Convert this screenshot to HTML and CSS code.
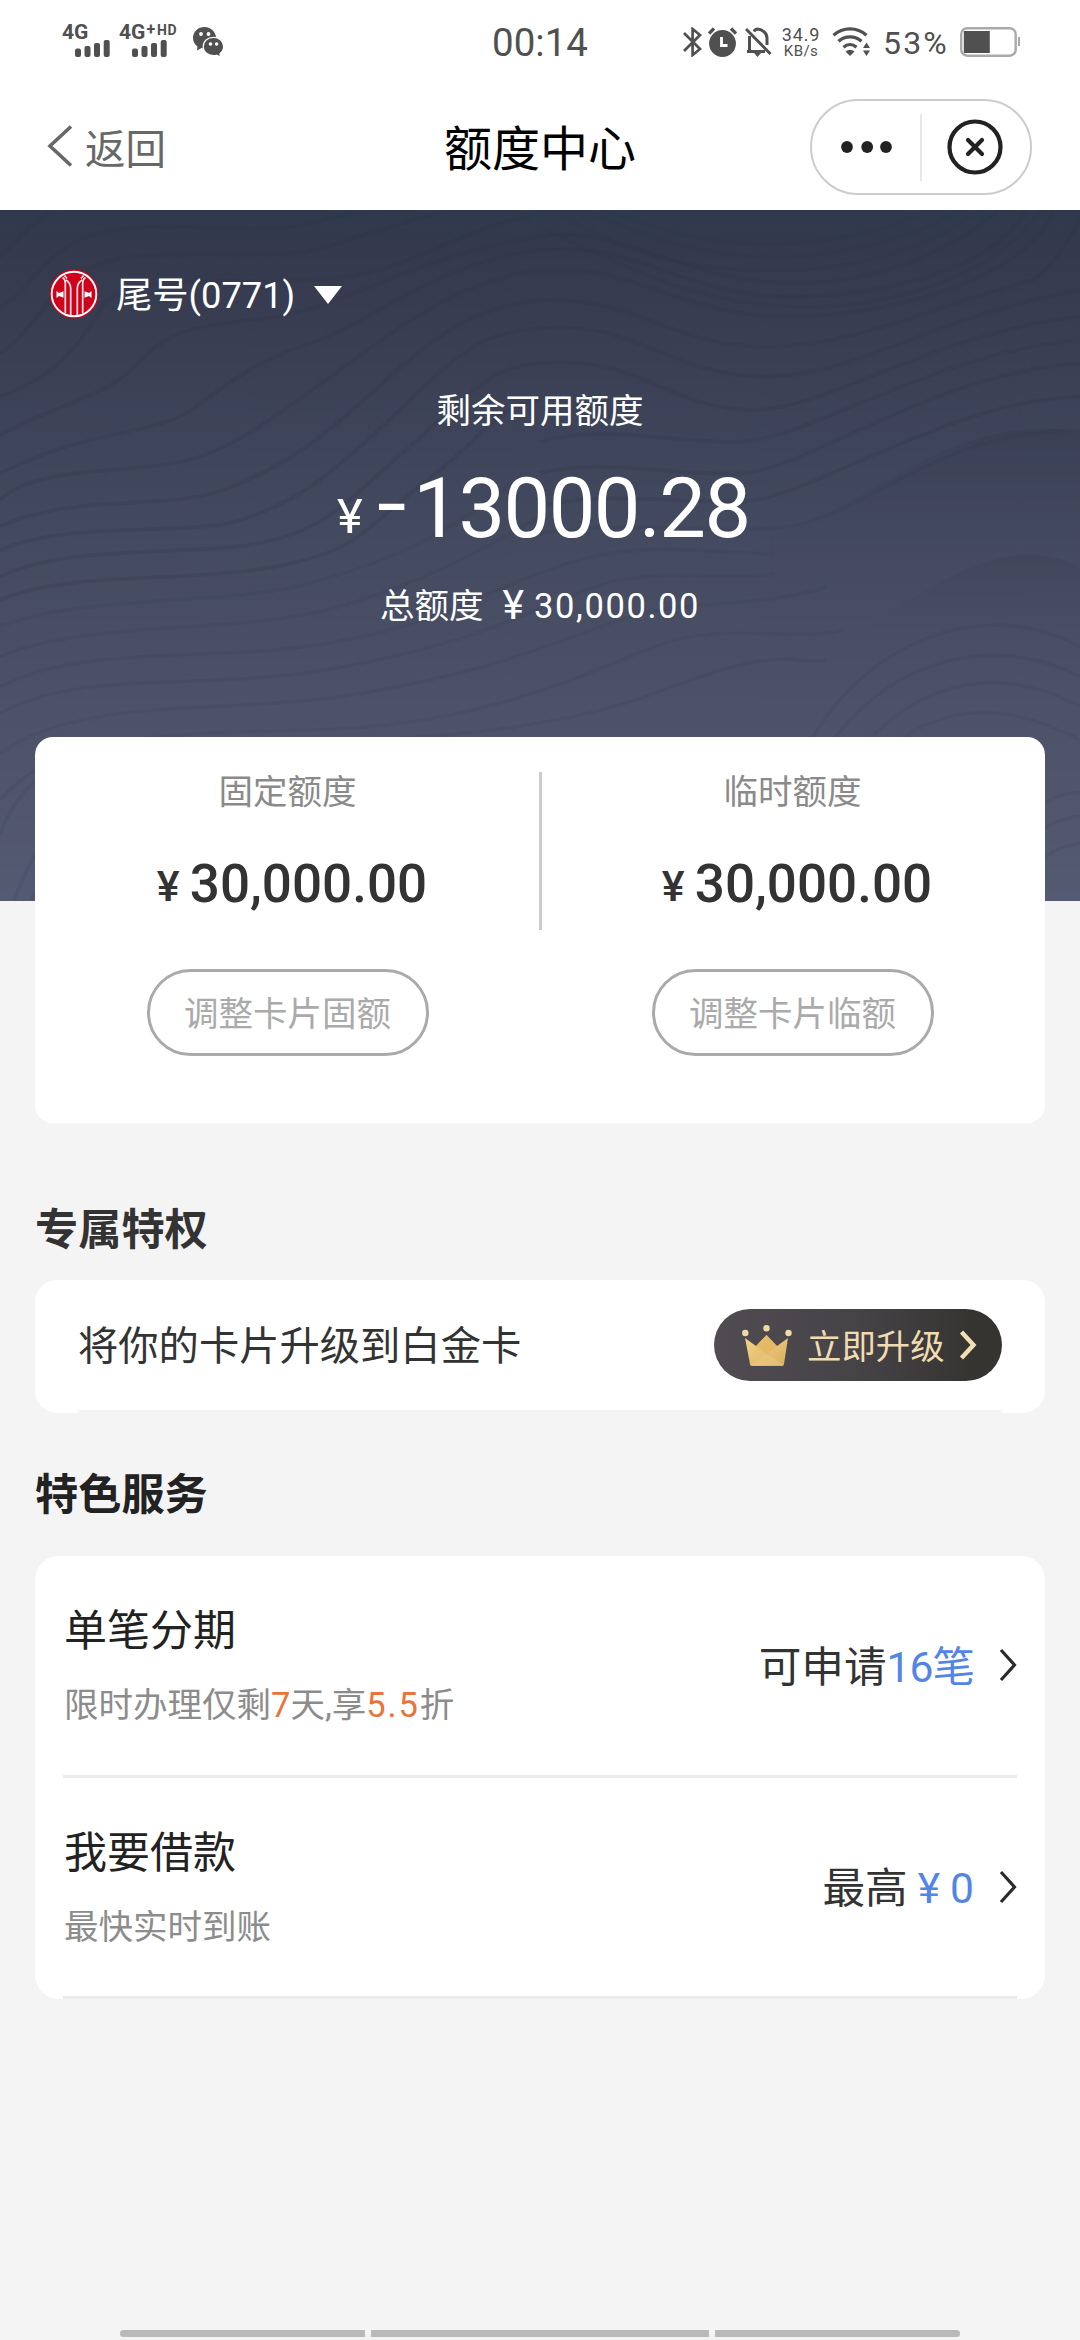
FILE: index.html
```html
<!DOCTYPE html>
<html lang="zh-CN">
<head>
<meta charset="utf-8">
<title>额度中心</title>
<link rel="stylesheet" href="styles.css">
</head>
<body>
<div class="page">
  <div class="status">
    <div class="status-left">
      <div class="sim">
        <span class="net">4G</span>
        <svg class="bars" width="35" height="17" viewBox="0 0 35 17"><g fill="#505050"><rect y="8.500" width="6" height="8.500" rx="2"/><rect x="9.500" y="6" width="6" height="11" rx="2"/><rect x="19" y="3" width="6" height="14" rx="2"/><rect x="28.700" width="6" height="17" rx="2"/></g></svg>
      </div>
      <div class="sim sim-two">
        <span class="net">4G<sup class="plus">+</sup><sup class="hd">HD</sup></span>
        <svg class="bars" width="35" height="17" viewBox="0 0 35 17"><g fill="#505050"><rect y="8.500" width="6" height="8.500" rx="2"/><rect x="9.500" y="6" width="6" height="11" rx="2"/><rect x="19" y="3" width="6" height="14" rx="2"/><rect x="28.700" width="6" height="17" rx="2"/></g></svg>
      </div>
      <svg class="wechat" width="31" height="30" viewBox="0 0 31 30">
        <path d="M11.500 0C5 0 0 4.800 0 11c0 3.600 1.700 6.500 4.400 8.500l-.4 4 4.500-2.500c1 .2 2 .4 3 .4C18 21.400 23 17 23 11S18 0 11.500 0Z" fill="#505050"/>
        <path d="M20.400 10.300c-5.800 0-10.200 4-10.200 9.200s4.400 9.200 10.200 9.200c1.100 0 2.200-.2 3.200-.5l3.800 1.800-.4-3.300c2.200-1.700 3.600-4.300 3.600-7.200 0-5.200-4.400-9.200-10.200-9.200Z" fill="#505050" stroke="#fff" stroke-width="1.200"/>
        <g fill="#fff"><circle cx="8" cy="7" r="1.900"/><circle cx="15.500" cy="7" r="1.900"/><circle cx="17.500" cy="17" r="1.800"/><circle cx="23.600" cy="17" r="1.800"/></g>
      </svg>
    </div>
    <div class="clock">00:14</div>
    <div class="status-right">
      <svg width="19" height="30" viewBox="0 0 19 30"><path d="M1 6 17 22 9.600 28V2L17 8 1 24" fill="none" stroke="#505050" stroke-width="2.700"/></svg>
      <svg class="alarm" width="29" height="30" viewBox="0 0 29 30"><circle cx="14.500" cy="16.500" r="13.400" fill="#505050"/><path d="M1 6.500 6 1.500M28 6.500 23 1.500" stroke="#505050" stroke-width="3.200"/><path d="M13.500 10v8.500h6" fill="none" stroke="#fff" stroke-width="2.800"/></svg>
      <svg class="bell" width="27" height="30" viewBox="0 0 27 30"><path d="M4.500 9v14M2 24.500h18M9 4.500c1-1.800 2-2.500 3.500-2.500 5 .5 9.500 4 9.500 9v7M1 2l24.500 25" fill="none" stroke="#505050" stroke-width="3"/><path d="M9 26h7l-3.500 4Z" fill="#505050"/></svg>
      <div class="speed"><span>34.9</span><small>KB/s</small></div>
      <svg class="wifi" width="39" height="30" viewBox="0 0 39 30"><g fill="none" stroke="#505050" stroke-width="3.300"><path d="M1.500 8.300C11-.2 25-.2 34.500 8.300"/><path d="M6.500 14.300c6.500-6 16.500-6 23 0"/><path d="M11.500 20.300c4-3.600 9-3.600 13 0"/></g><path d="M13.500 24.500q4.500-3.500 9 0L18 29Z" fill="#505050"/><path d="M31 21l3.500-5.500L38 21ZM31 23.500l3.500 5.500 3.500-5.500Z" fill="#505050"/></svg>
      <span class="pct">53%</span>
      <svg class="battery" width="60" height="30" viewBox="0 0 60 30"><rect x="1.200" y="1.200" width="54.500" height="27.500" rx="6" fill="#fff" stroke="#aaa" stroke-width="2.400"/><rect x="3.800" y="4" width="26" height="22" fill="#505050"/><path d="M59 10v9" stroke="#aaa" stroke-width="2"/></svg>
    </div>
  </div>

  <div class="nav">
    <div class="back">
      <svg width="26" height="42" viewBox="0 0 26 42"><path d="M24 1.500 3 21l21 19.500" fill="none" stroke="#686868" stroke-width="3.600"/></svg>
      <span>返回</span>
    </div>
    <div class="title">额度中心</div>
    <div class="capsule">
      <svg class="dots" width="52" height="14" viewBox="0 0 52 14"><g fill="#222"><circle cx="6" cy="7" r="5.900"/><circle cx="26.200" cy="7" r="5.900"/><circle cx="45" cy="7" r="5.900"/></g></svg>
      <i class="capsule-line"></i>
      <svg class="close" width="56" height="56" viewBox="0 0 56 56"><circle cx="28" cy="28" r="25.500" fill="none" stroke="#222" stroke-width="4.200"/><path d="m21 21 14 14M35 21 21 35" stroke="#222" stroke-width="4.200" stroke-linecap="round"/></svg>
    </div>
  </div>

  <div class="hero">
    <svg class="waves" width="1080" height="691" viewBox="0 0 1080 691">
      <defs>
        <linearGradient id="hill" x1="0" y1="0" x2="0" y2="1"><stop offset="0" stop-color="#363b50" stop-opacity=".5"/><stop offset=".7" stop-color="#464b61" stop-opacity="0"/></linearGradient>
        <linearGradient id="hillLow" x1="0" y1="0" x2="0" y2="1"><stop offset="0" stop-color="#3a3f54" stop-opacity=".38"/><stop offset=".7" stop-color="#464b61" stop-opacity="0"/></linearGradient>
      </defs>
      <path d="M770 325C860 300 920 232 1020 220Q1050 216 1080 222V470H770Z" fill="url(#hill)"/>
      <path d="M760 480C870 430 950 338 1040 345Q1065 348 1080 358V480Z" fill="url(#hillLow)"/>
      <g transform="translate(0 -10) scale(.3444 .3333)" fill="none" stroke="#2b3047" stroke-opacity=".2" stroke-width="11">
        <path d="M0 170C60 120 90 60 160 30"/>
        <path d="M0 320C100 270 130 120 330 90S760 110 900 70S1060 40 1120 30"/>
        <path d="M0 460C120 380 150 220 330 180S800 190 950 140S1200 60 1300 30"/>
        <path d="M0 590C160 530 230 440 290 330S600 250 900 240S1300 90 1540 50"/>
        <path d="M0 705C150 620 300 590 380 510S480 400 620 375S800 365 950 310S1300 150 1568 110C1800 70 2000 250 2300 250S2800 120 2900 30"/>
        <path d="M0 820C250 690 450 700 540 640S700 500 900 430S1250 190 1568 150C1850 120 1980 290 2290 290S2900 190 2980 30"/>
        <path d="M0 900C100 800 350 820 500 790C650 770 800 650 1000 500S1350 240 1568 210C1850 190 1980 350 2280 350S2980 240 3060 30"/>
        <path d="M0 980C200 880 500 930 650 870S900 750 1100 560S1400 320 1568 300C1850 290 1950 440 2220 440S2700 320 3000 240Q3090 170 3136 50"/>
        <path d="M0 1050C200 960 550 1010 700 960S950 840 1150 640S1400 400 1568 385C1850 360 1950 530 2220 530S2700 350 3136 270"/>
        <path d="M0 1130C200 1030 550 1070 750 1030S1000 910 1200 730S1430 500 1568 490C1850 460 1950 630 2180 630S2700 400 3136 350"/>
        <path d="M0 1200C200 1110 550 1150 800 1100S1050 990 1230 850S1430 620 1568 600"/>
        <path d="M1568 725C1750 670 1950 730 2150 725S2700 460 3136 420"/>
        <path d="M1568 820C1750 770 1950 830 2150 820S2700 520 3136 490"/>
        <path d="M1568 920C1750 870 1950 910 2150 905S2750 600 3136 590"/>
      </g>
      <g transform="translate(0 -10) scale(.3444 .3333)" fill="none" stroke="#2b3047" stroke-opacity=".1" stroke-width="10">
        <path d="M1568 1000C1800 960 2000 1000 2250 985S2700 690 3136 690"/>
        <path d="M1700 30C1900 130 2100 180 2300 170S2700 90 2780 30"/>
        <path d="M1760 30C1950 110 2100 140 2290 130S2600 80 2680 30"/>
        <path d="M1640 50C1850 180 2050 220 2300 210S2740 120 2840 30"/>
        <path d="M1568 80C1800 190 2000 310 2300 320S2900 220 3020 30"/>
        <path d="M0 1280C250 1180 650 1220 900 1150S1300 1000 1500 840"/>
        <path d="M0 1370C250 1260 700 1300 950 1230S1350 1080 1568 950"/>
        <path d="M0 1460C250 1330 600 1390 950 1330S1400 1170 1650 1090S2100 1070 2250 1060"/>
        <path d="M0 1540C250 1400 600 1480 1000 1400S1500 1250 1700 1170S2100 1150 2250 1120"/>
        <path d="M0 1660C250 1480 650 1550 1050 1480S1600 1330 1800 1260S2200 1230 2400 1160"/>
        <path d="M0 1800C150 1620 400 1600 900 1590S1700 1420 1900 1340S2300 1330 2450 1290"/>
        <path d="M0 1900C80 1700 200 1650 500 1640S1500 1640 1900 1480S2300 1400 2400 1380"/>
        <path d="M2340 1650C2500 1330 2850 1180 3136 1340"/>
        <path d="M2400 1650C2550 1410 2850 1280 3136 1430"/>
        <path d="M2460 1700C2600 1490 2850 1360 3136 1520"/>
        <path d="M2520 1700C2650 1560 2850 1460 3136 1620"/>
        <path d="M2980 1860Q3060 1770 3136 1780M2980 1930Q3060 1850 3136 1850M2980 2010Q3060 1940 3136 1930M40 2100Q120 1900 200 1830M90 2100Q150 2000 200 1940"/>
      </g>
    </svg>
    <div class="account">
      <svg width="50" height="50" viewBox="0 0 50 50">
        <circle cx="25" cy="25" r="24.500" fill="#d0021b"/>
        <circle cx="25" cy="25" r="22.300" fill="none" stroke="#fff" stroke-width="1.900"/>
        <g fill="none" stroke="#fbe3e3" stroke-width="1.700"><path d="M16.300 44.500V14Q16.300 10 13.500 8.500M33.700 44.500V14Q33.700 10 36.500 8.500M21.700 46.500V19Q21.500 14 17 11M28.300 46.500V19Q28.500 14 33 11M15.500 6.500 18 9.500M34.500 6.500 32 9.500"/></g>
        <path d="M7.500 22 10 24l4.500-1.800v6.600L10 27l-2.500 2ZM42.500 22 40 24l-4.500-1.800v6.600L40 27l2.500 2Z" fill="#fff"/>
      </svg>
      <span class="tail">尾号(0771)</span>
      <svg class="caret" width="28" height="18" viewBox="0 0 28 18"><path d="M0 0h28L14 18Z" fill="#fff"/></svg>
    </div>
    <div class="avail-label">剩余可用额度</div>
    <div class="avail"><span class="yen">¥</span><span class="minus">-</span><span>13000.28</span></div>
    <div class="total"><span>总额度</span><span class="total-yen">¥</span><span class="total-num">30,000.00</span></div>
  </div>

  <div class="limits">
    <div class="limit">
      <div class="limit-label">固定额度</div>
      <div class="limit-num"><span class="limit-yen">¥</span>30,000.00</div>
      <div class="limit-btn">调整卡片固额</div>
    </div>
    <i class="limit-line"></i>
    <div class="limit">
      <div class="limit-label">临时额度</div>
      <div class="limit-num"><span class="limit-yen">¥</span>30,000.00</div>
      <div class="limit-btn">调整卡片临额</div>
    </div>
  </div>

  <h2 class="heading heading-perk">专属特权</h2>
  <div class="card perk">
    <div class="perk-row">
      <span class="perk-text">将你的卡片升级到白金卡</span>
      <div class="upgrade">
        <svg width="50" height="41" viewBox="0 0 50 41"><defs><linearGradient id="gold" x1="0" y1="0" x2="1" y2="1"><stop offset="0" stop-color="#f5d488"/><stop offset="1" stop-color="#d9ae5f"/></linearGradient></defs><path d="M3 13 14 21 24.500 10 35 21 46 13 42 39Q42 41 40 41H10Q8 41 8 39Z" fill="url(#gold)"/><path d="M24.500 10 35 21 24.500 29 14 21Z" fill="#e0b25c" opacity=".6"/><path d="M8 40 24.500 29 42 40" fill="#ecc983" opacity=".5"/><g fill="#efd9a6"><circle cx="3.300" cy="8" r="3.200"/><circle cx="24.500" cy="3.300" r="3.200"/><circle cx="46.500" cy="8" r="3.200"/></g></svg>
        <span>立即升级</span>
        <svg class="go" width="18" height="30" viewBox="0 0 18 30"><path d="M2.500 2 14.500 15 2.500 28" fill="none" stroke="#f3dfb3" stroke-width="4.400"/></svg>
      </div>
    </div>
  </div>

  <h2 class="heading heading-service">特色服务</h2>
  <div class="card services">
    <div class="service">
      <div>
        <div class="service-name">单笔分期</div>
        <div class="service-note">限时办理仅剩<b>7</b>天,享<b class="wide">5.5</b>折</div>
      </div>
      <div class="service-right"><span>可申请<em class="count">16笔</em></span><svg width="18" height="34" viewBox="0 0 18 34"><path d="M2 2 15.500 17 2 32" fill="none" stroke="#2b2b2b" stroke-width="3.200"/></svg></div>
    </div>
    <div class="service">
      <div>
        <div class="service-name">我要借款</div>
        <div class="service-note">最快实时到账</div>
      </div>
      <div class="service-right"><span>最高<em class="money"><span>¥</span><span>0</span></em></span><svg width="18" height="34" viewBox="0 0 18 34"><path d="M2 2 15.500 17 2 32" fill="none" stroke="#2b2b2b" stroke-width="3.200"/></svg></div>
    </div>
  </div>

  <div class="gesture"><i></i><i></i><i></i></div>
</div>
</body>
</html>
```
FILE: styles.css
```css
* { box-sizing: border-box; }
body {
  margin: 0;
  background: #f4f4f4;
  font-family: Roboto, "Noto Sans CJK SC", sans-serif;
  color: #333;
}
svg { display: block; flex: none; }
.page {
  width: 1080px;
  height: 2340px;
  display: flex;
  flex-direction: column;
  overflow: hidden;
}

/* status bar */
.status {
  height: 84px;
  flex: none;
  background: #fff;
  display: grid;
  grid-template-columns: 430px 220px 430px;
  color: #505050;
}
.status-left { display: flex; padding: 25px 0 0 62px; }
.sim { width: 57px; height: 32px; }
.sim-two { width: 74px; }
.net {
  display: flex;
  height: 15px;
  font-size: 21px;
  line-height: 15px;
  font-weight: 700;
}
.plus, .hd { font-size: 16px; line-height: 10px; }
.plus { margin-left: 1px; }
.hd { font-size: 14px; margin-left: 2px; letter-spacing: .5px; }
.bars { margin-left: 13px; }
.wechat { margin-top: 2px; }
.clock {
  text-align: center;
  font-size: 38.500px;
  line-height: 85px;
}
.status-right { display: flex; padding: 27px 0 0 33px; }
.alarm { margin-left: 6px; }
.bell { margin-left: 8px; }
.speed {
  width: 42px;
  margin: -3px 0 0 8px;
  display: flex;
  flex-direction: column;
  align-items: center;
  font-size: 18px;
  line-height: 21px;
  letter-spacing: .8px;
}
.speed small { font-size: 15px; line-height: 13px; letter-spacing: .4px; }
.wifi { margin-left: 10px; }
.pct { width: 89px; padding-left: 12px; font-size: 32px; line-height: 33px; letter-spacing: 2.2px; }

/* title bar */
.nav {
  height: 126px;
  flex: none;
  background: #fff;
  display: grid;
  grid-template-columns: 1fr auto 1fr;
}
.back {
  display: flex;
  padding: 41px 0 0 47px;
  font-size: 40.500px;
  line-height: 50px;
  color: #686868;
}
.back span { margin-left: 12px; }
.title { font-size: 48px; line-height: 132px; color: #000; }
.capsule {
  justify-self: end;
  width: 222px;
  height: 96px;
  margin: 15px 48px 0 0;
  border: 2px solid #ccc;
  border-radius: 48px;
  display: flex;
  align-items: center;
}
.dots { margin-left: 29px; }
.capsule-line { width: 2px; height: 67px; margin-left: 27px; background: #e8e8e8; }
.close { margin-left: 25px; }

/* balance header */
.hero {
  position: relative;
  height: 691px;
  flex: none;
  padding-top: 59px;
  background: linear-gradient(#2f3a4d 0, #34394e 40px, #42485d 300px, #4d5268 500px, #545a71 100%);
  color: #fff;
}
.waves { position: absolute; inset: 0; }
.account, .avail-label, .avail, .total { position: relative; }
.account { display: flex; height: 50px; padding-left: 49px; }
.tail { margin-left: 17px; font-size: 36.300px; line-height: 53px; }
.caret { margin: 17px 0 0 19px; }
.avail-label {
  margin-top: 67px;
  text-align: center;
  font-size: 34.5px;
  line-height: 50px;
}
.avail {
  display: flex;
  height: 90px;
  margin-top: 25px;
  padding-left: 337px;
  font-size: 83px;
  line-height: 95px;
  letter-spacing: -1.5px;
}
.yen { font-size: 49px; line-height: 112px; }
.minus { width: 36px; margin-left: 16px; line-height: 85px; transform: scaleX(1.28); transform-origin: left; }
.total {
  display: flex;
  margin-top: 30px;
  padding-left: 380px;
  font-size: 34.5px;
  line-height: 50px;
}
.total-yen { margin-left: 19px; font-size: 41px; line-height: 48px; }
.total-num { margin-left: 10px; letter-spacing: 1.6px; }

/* fixed and temporary limits */
.limits {
  position: relative;
  width: 1010px;
  height: 386px;
  flex: none;
  margin: -164px auto 0;
  background: #fff;
  border-radius: 18px;
  display: flex;
}
.limit {
  flex: 1;
  display: flex;
  flex-direction: column;
  align-items: center;
}
.limit-label { margin-top: 30px; font-size: 34.5px; line-height: 50px; color: #8a8a8a; }
.limit-num {
  display: flex;
  height: 60px;
  margin-top: 36px;
  font-size: 53px;
  line-height: 62px;
  font-weight: 500;
  padding-left: 9px;
}
.limit-yen { width: 33px; font-size: 43px; line-height: 66px; }
.limit-btn {
  width: 282px;
  height: 87px;
  margin-top: 56px;
  border: 3px solid #aaa;
  border-radius: 44px;
  text-align: center;
  font-size: 34.5px;
  line-height: 84px;
  color: #aaa;
}
.limit-line { width: 3px; height: 158px; margin: 35px -1.5px 0; background: #ccc; }

/* sections */
.heading { margin: 0 0 0 35px; flex: none; font-size: 43.200px; line-height: 60px; font-weight: 700; }
.heading-perk { margin-top: 78px; }
.heading-service { margin-top: 53px; color: #222; }
.card { width: 1010px; flex: none; margin: 0 auto; background: #fff; }
.perk { height: 133px; margin-top: 19px; padding: 0 43px; border-radius: 22px; }
.perk-row {
  height: 133px;
  border-bottom: 3px solid #f3f3f3;
  display: flex;
  justify-content: space-between;
  align-items: center;
}
.perk-text { font-size: 40.3px; line-height: 60px; padding-top: 3px; }
.upgrade {
  width: 288px;
  height: 72px;
  padding-left: 28px;
  border-radius: 36px;
  background: linear-gradient(90deg, #504c52, #464347 50%, #353431 90%);
  display: flex;
  align-items: center;
  font-size: 34.4px;
  color: #f0dcb0;
}
.upgrade span { margin: 0 0 3px 15px; }
.go { margin-left: 14px; }
.services { height: 443px; margin-top: 30px; padding: 0 28px 0; border-radius: 24px; }
.service {
  height: 221.5px;
  border-bottom: 3px solid #ececec;
  display: flex;
  justify-content: space-between;
  padding-left: 1px;
}
.service-name { margin-top: 45px; font-size: 43px; line-height: 60px; color: #222; }
.service-note { margin-top: 19px; font-size: 34.5px; line-height: 50px; color: #8c8c8c; }
.service-note b { font-weight: 400; color: #e8743c; }
.service-note .wide { letter-spacing: 1.9px; }
.service-right { display: flex; align-items: center; font-size: 42.600px; }
.service-right > span { margin-bottom: 4px; }
.service-right svg { margin-left: 25px; }
.service-right em { font-style: normal; color: #5485e6; }
.service-right .count { letter-spacing: -1px; }
.service-right .money span { margin-left: 10px; }

.gesture {
  margin-top: auto;
  padding: 0 120px 3px;
  display: grid;
  grid-template-columns: 245px 1fr 245px;
  gap: 6px;
}
.gesture i { height: 7px; background: #b9b9b9; }
.gesture i:first-child { border-radius: 4px 0 0 4px; }
.gesture i:last-child { border-radius: 0 4px 4px 0; }
```
